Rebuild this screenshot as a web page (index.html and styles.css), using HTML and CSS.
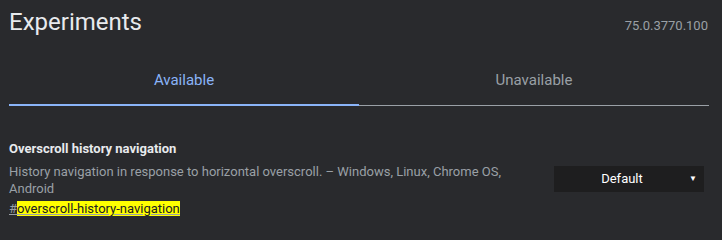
FILE: index.html
```html
<!DOCTYPE html>
<html lang="en">
<head>
    <meta charset="UTF-8">
    <title>Experiments</title>
    <link rel="stylesheet" href="styles.css">
</head>
<body>

<!-- En-tête -->
<header class="header">
    <h1 class="title">Experiments</h1>
    <span class="version">75.0.3770.100</span>
</header>

<!-- Onglets -->
<nav class="tabs">
    <div class="tab tab-active">Available</div>
    <div class="tab">Unavailable</div>
</nav>

<section class="experiment">
    <div class="experiment-text">
        <h3 class="experiment-name">Overscroll history navigation</h3>
        <p class="experiment-desc">History navigation in response to horizontal overscroll. – Windows, Linux, Chrome OS, Android</p>
        <a class="permalink" href="#overscroll-history-navigation">#<mark>overscroll-history-navigation</mark></a>
    </div>
    <div class="experiment-actions">
        <div class="select">
            <span>Default</span>
            <span class="arrow">▼</span>
        </div>
    </div>
</section>

</body>
</html>
```

FILE: styles.css
```css
body {
    font-family: 'Roboto', 'Liberation Sans', sans-serif;
    margin: 0;
    padding: 0 13px 0 9px;
    background: #292a2d;
    color: #e8eaed;
}

.header {
    display: flex;
    justify-content: space-between;
    align-items: baseline;
    padding-top: 8px;
}

.title {
    margin: 0;
    font-size: 24px;
    font-weight: 400;
    line-height: 28px;
}

.version {
    font-size: 13px;
    color: #9aa0a6;
    padding-right: 1px;
}

.tabs {
    display: flex;
    margin-top: 30px;
    border-bottom: 1px solid #9aa0a6;
}

.tab {
    flex: 1;
    text-align: center;
    font-size: 15px;
    color: #9aa0a6;
    padding: 5px 0 15px;
    border-bottom: 2px solid transparent;
    margin-bottom: -1px;
}

.tab-active {
    color: #8ab4f8;
    border-bottom-color: #8ab4f8;
}

.experiment {
    display: flex;
    justify-content: space-between;
    align-items: center;
    padding-top: 34px;
}

.experiment-text {
    width: 520px;
    font-size: 13px;
    line-height: 17px;
}

.experiment-name {
    margin: 0;
    font-size: 13px;
    font-weight: 700;
    line-height: 17px;
}

.experiment-desc {
    margin: 6px 0 3px;
    font-size: 13px;
    line-height: 17px;
    color: #9aa0a6;
}

.permalink {
    font-size: 13px;
    line-height: 17px;
    color: #9aa0a6;
}

.permalink mark {
    background: #ffff00;
    color: #202124;
}

.experiment-actions {
    padding-right: 5px;
}

.select {
    position: relative;
    width: 136px;
    height: 26px;
    line-height: 26px;
    padding-right: 14px;
    background: #1e1e1f;
    color: #fff;
    font-size: 13px;
    text-align: center;
}

.arrow {
    position: absolute;
    right: 7px;
    top: 0;
    font-size: 8px;
}
```
